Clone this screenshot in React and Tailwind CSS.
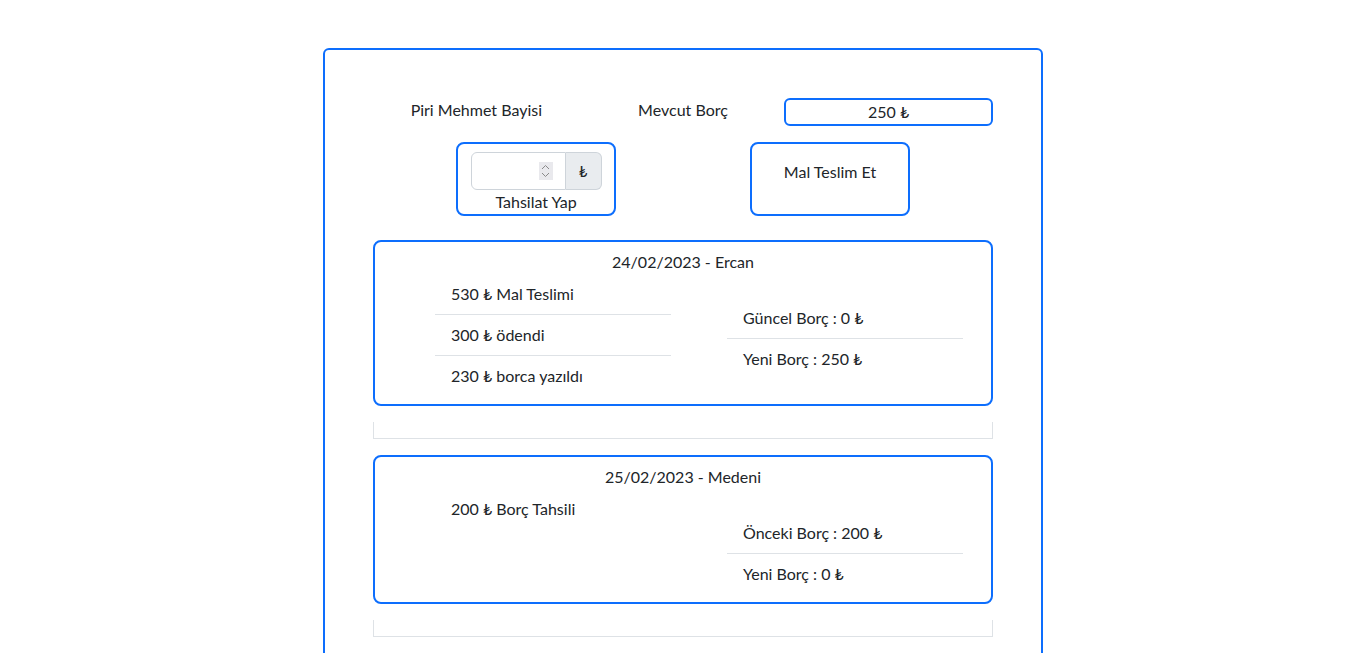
import React from 'react';

const entries = [
  {
    title: '24/02/2023 - Ercan',
    left: ['530 ₺ Mal Teslimi', '300 ₺ ödendi', '230 ₺ borca yazıldı'],
    right: ['Güncel Borç : 0 ₺', 'Yeni Borç : 250 ₺']
  },
  {
    title: '25/02/2023 - Medeni',
    left: ['200 ₺ Borç Tahsili'],
    right: ['Önceki Borç : 200 ₺', 'Yeni Borç : 0 ₺']
  }
];

function ItemList({ items, className }) {
  return (
    <ul className={`w-[236px] ${className}`}>
      {items.map((item, i) => (
        <li
          key={i}
          className={`px-4 py-2 leading-6 ${i < items.length - 1 ? 'border-b border-[#dee2e6]' : ''}`}
        >
          {item}
        </li>
      ))}
    </ul>
  );
}

export default function App() {
  return (
    <div className="min-h-screen bg-white pt-[48px] text-[16px] text-[#212529] font-['Lato','DejaVu_Sans',sans-serif]">
      <div className="mx-auto w-[720px] min-h-[620px] rounded-md border-2 border-[#0d6efd] px-[48px] pt-[48px] pb-10">
        <div className="grid grid-cols-3 items-start">
          <div className="text-center leading-6">Piri Mehmet Bayisi</div>
          <div className="text-center leading-6">Mevcut Borç</div>
          <div className="-ml-[2px] flex h-[28px] items-center justify-center rounded-md border-2 border-[#0d6efd]">
            250 ₺
          </div>
        </div>

        <div className="mt-4 flex">
          <div className="ml-[83px] flex h-[74px] w-[160px] flex-col items-center rounded-lg border-2 border-[#0d6efd] pt-2">
            <div className="flex h-[38px] w-[131px]">
              <div className="flex flex-1 items-center rounded-l-md border border-[#ced4da] bg-white pr-[12px]">
                <input type="text" className="w-full min-w-0 px-2 outline-none" />
                <div className="flex h-[18px] w-[17px] flex-col items-center justify-center bg-[#e9e9ed]">
                  <svg width="9" height="14" viewBox="0 0 9 14" fill="none" stroke="#8a8a8a" strokeWidth="1">
                    <path d="M1 5 L4.5 1.5 L8 5" />
                    <path d="M1 9 L4.5 12.5 L8 9" />
                  </svg>
                </div>
              </div>
              <div className="flex w-[36px] items-center justify-center rounded-r-md border border-l-0 border-[#ced4da] bg-[#e9ecef] text-[15px]">
                ₺
              </div>
            </div>
            <div className="leading-6">Tahsilat Yap</div>
          </div>
          <div className="ml-[134px] flex h-[74px] w-[160px] justify-center rounded-lg border-2 border-[#0d6efd] pt-4">
            <div className="leading-6">Mal Teslim Et</div>
          </div>
        </div>

        {entries.map((entry, idx) => (
          <div key={idx} className={idx === 0 ? 'mt-6' : 'mt-4'}>
            <div className="rounded-lg border-2 border-[#0d6efd] pt-2 pb-2">
              <div className="text-center leading-6">{entry.title}</div>
              <div className="flex items-start">
                <ItemList items={entry.left} className="ml-[60px]" />
                <ItemList items={entry.right} className="ml-[56px] mt-6" />
              </div>
            </div>
            <div className="mt-4 h-[17px] border-x border-b border-[#dee2e6]" />
          </div>
        ))}
      </div>
    </div>
  );
}
